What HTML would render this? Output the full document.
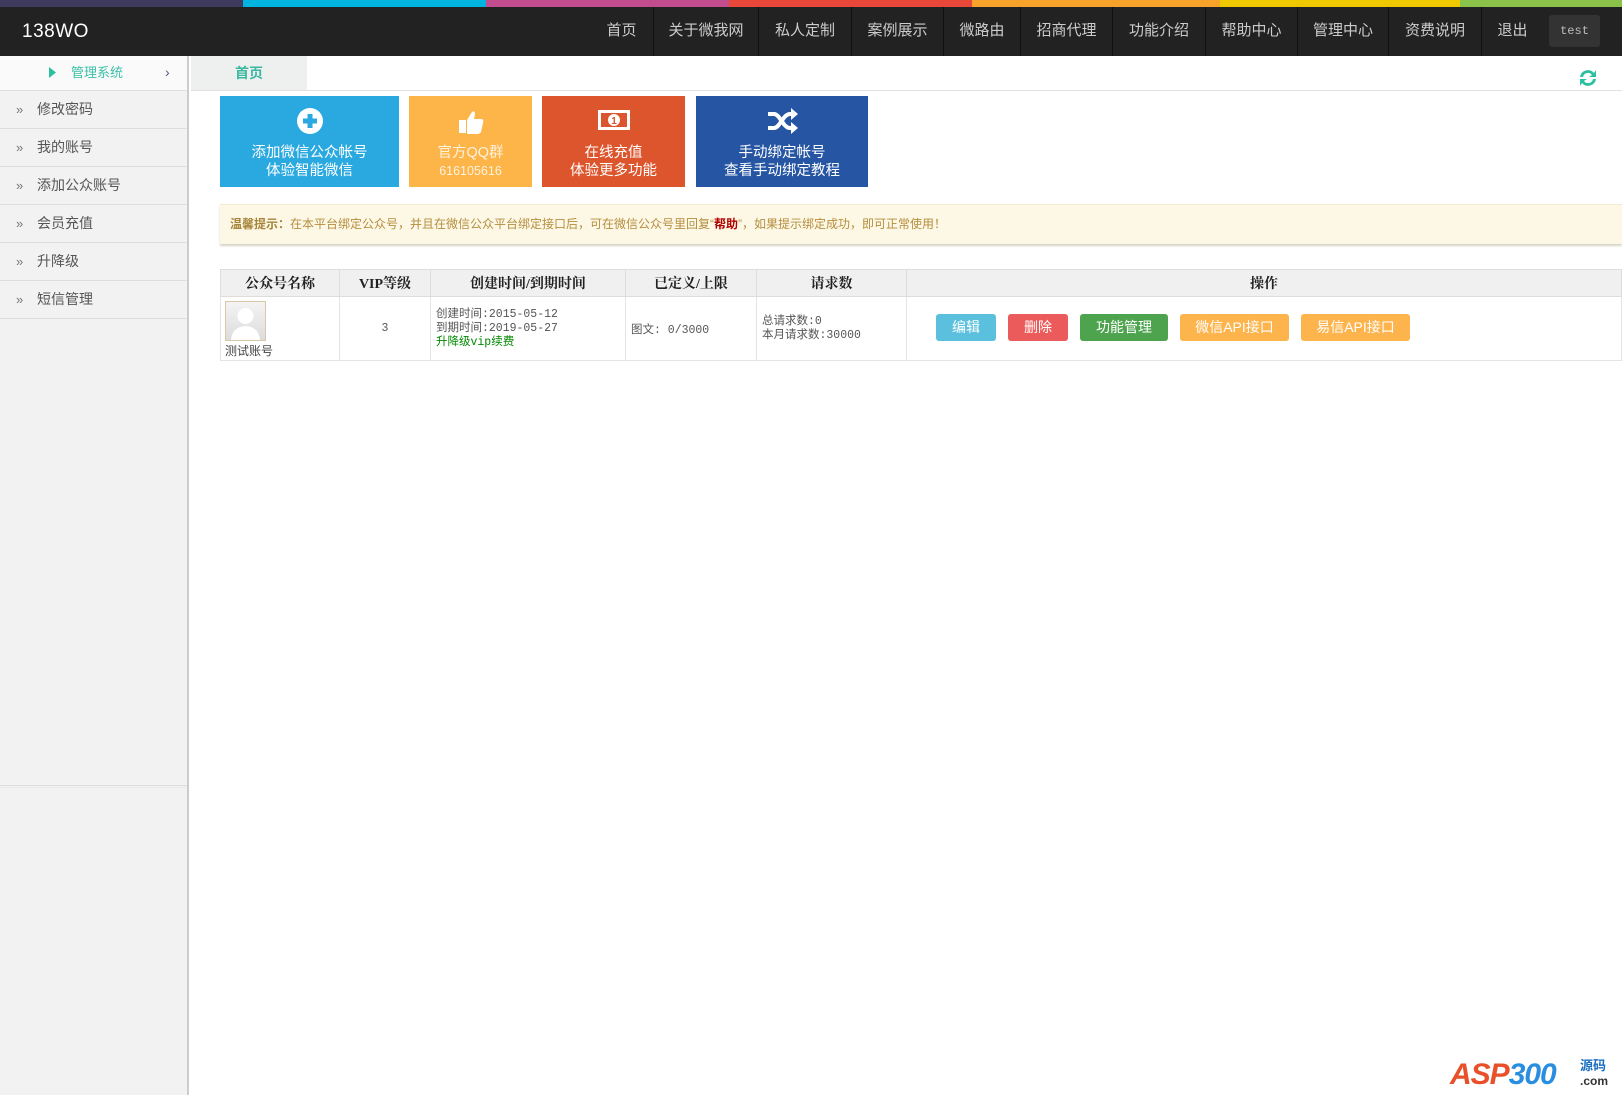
<!DOCTYPE html>
<html><head><meta charset="utf-8">
<style>
*{margin:0;padding:0;box-sizing:border-box}
body{width:1622px;height:1095px;overflow:hidden;background:#fff;font-family:"Liberation Sans","Noto Sans CJK SC",sans-serif;position:relative}
.abs{position:absolute}
.bar{top:0;height:7px}
#hdr{top:7px;left:0;width:1622px;height:49px;background:#222}
.nav{position:absolute;top:7px;height:49px;line-height:47px;color:#ccc;font-size:15px;text-align:center;border-left:1px solid #111}
#side{left:0;top:56px;width:189px;height:1039px;background:#f2f2f2;border-right:2px solid #ccc}
.si{position:absolute;left:0;width:187px;height:38px;border-bottom:1px solid #dedede;font-size:14px;color:#555;line-height:37px}
.si b{font-weight:normal;position:absolute;left:16px;color:#777;font-size:13px}
.si span{position:absolute;left:37px}
.tile{position:absolute;top:96px;height:91px;color:#fff;text-align:center;font-size:14.5px;line-height:18px}
.tile .t{position:absolute;left:0;right:0;top:48px}
.tile svg{position:absolute;left:50%;top:12px;transform:translateX(-50%)}
table{position:absolute;left:220px;top:269px;width:1402px;border-collapse:collapse;font-size:12px;color:#555}
th{background:#f0f0f0;height:27px;font-size:14px;color:#222;border:1px solid #ddd;font-family:"Liberation Serif","Noto Serif CJK SC",serif}
td{border:1px solid #e4e4e4;height:64px;vertical-align:middle;font-family:"Liberation Mono","Noto Sans CJK SC",monospace;font-size:11.5px}
.btn{position:absolute;top:314px;height:27px;line-height:27px;color:#fff;font-size:14px;text-align:center;border-radius:3px}
</style></head><body>
<div class="abs bar" style="left:0;width:243px;background:#3e3a5e"></div>
<div class="abs bar" style="left:243px;width:243px;background:#00b4e0"></div>
<div class="abs bar" style="left:486px;width:243px;background:#c24c8e"></div>
<div class="abs bar" style="left:729px;width:243px;background:#e8473a"></div>
<div class="abs bar" style="left:972px;width:248px;background:#f6a22b"></div>
<div class="abs bar" style="left:1220px;width:240px;background:#f0c800"></div>
<div class="abs bar" style="left:1460px;width:162px;background:#8bc34a"></div>
<div id="hdr" class="abs"></div>
<div class="abs" style="left:22px;top:21px;color:#fff;font-size:19px;letter-spacing:0.5px">138WO</div>
<div class="nav" style="left:590px;width:63px;border-left:none">首页</div>
<div class="nav" style="left:653px;width:105px">关于微我网</div>
<div class="nav" style="left:758px;width:93px">私人定制</div>
<div class="nav" style="left:851px;width:92px">案例展示</div>
<div class="nav" style="left:943px;width:77px">微路由</div>
<div class="nav" style="left:1020px;width:92px">招商代理</div>
<div class="nav" style="left:1112px;width:93px">功能介绍</div>
<div class="nav" style="left:1205px;width:92px">帮助中心</div>
<div class="nav" style="left:1297px;width:91px">管理中心</div>
<div class="nav" style="left:1388px;width:93px">资费说明</div>
<div class="nav" style="left:1481px;width:62px">退出</div>
<div class="abs" style="left:1549px;top:15px;width:51px;height:32px;background:#333;border-radius:3px;color:#bbb;font-size:12px;line-height:32px;text-align:center;font-family:'Liberation Mono',monospace">test</div>

<div id="side" class="abs">
 <div class="si" style="top:0;height:35px;background:#fafafa;line-height:33px">
  <svg class="abs" style="left:49px;top:11px" width="7" height="11"><path d="M0 0L7 5.5L0 11Z" fill="#2cc0a0"/></svg>
  <span style="left:71px;color:#3cc0a8;font-size:13px">管理系统</span>
  <span style="left:165px;color:#557;font-size:14px">›</span>
 </div>
 <div class="si" style="top:35px"><b>»</b><span>修改密码</span></div>
 <div class="si" style="top:73px"><b>»</b><span>我的账号</span></div>
 <div class="si" style="top:111px"><b>»</b><span>添加公众账号</span></div>
 <div class="si" style="top:149px"><b>»</b><span>会员充值</span></div>
 <div class="si" style="top:187px"><b>»</b><span>升降级</span></div>
 <div class="si" style="top:225px"><b>»</b><span>短信管理</span></div>
 <div class="abs" style="left:0;top:729px;width:187px;border-top:1px solid #ddd;border-bottom:1px solid #eaeaea;height:3px"></div>
</div>

<div class="abs" style="left:191px;top:56px;width:116px;height:35px;background:#eef0f0;color:#3ab8a0;font-size:14px;line-height:34px;text-align:center;font-weight:bold">首页</div>
<div class="abs" style="left:191px;top:90px;width:1431px;border-top:1px solid #e2e2e2"></div>
<svg class="abs" style="left:1577px;top:67px" width="22" height="22" viewBox="0 0 22 22"><path d="M3 10A8 8 0 0 1 17 6L19 3V10H12L15 8A5 5 0 0 0 6 10Z" fill="#2cc0a0"/><path d="M19 12A8 8 0 0 1 5 16L3 19V12H10L7 14A5 5 0 0 0 16 12Z" fill="#2cc0a0"/></svg>

<div class="tile" style="left:220px;width:179px;background:#29a9e0">
 <svg width="26" height="26" viewBox="0 0 26 26"><circle cx="13" cy="13" r="13" fill="#fff"/><path d="M10.5 6h5v4.5H20v5h-4.5V20h-5v-4.5H6v-5h4.5Z" fill="#29a9e0"/></svg>
 <div class="t">添加微信公众帐号<br>体验智能微信</div></div>
<div class="tile" style="left:409px;width:123px;background:#fdb54a">
 <svg width="28" height="28" viewBox="0 0 28 28"><rect x="2" y="12" width="7" height="13" fill="#fff"/><path d="M10 12L15 4Q18 2 18 6L17 11H25Q27 12 26 15L24 24Q23 26 20 26H10Z" fill="#fff"/></svg>
 <div class="t" style="color:#fff2dc">官方QQ群<br><span style="font-size:12.5px">616105616</span></div></div>
<div class="tile" style="left:542px;width:143px;background:#dc552d">
 <svg width="34" height="24" viewBox="0 0 34 24"><rect x="1" y="2" width="32" height="20" fill="#fff"/><rect x="4" y="5" width="26" height="14" fill="#dc552d"/><circle cx="17" cy="12" r="6" fill="#fff"/><text x="17" y="16" font-size="10" text-anchor="middle" fill="#dc552d" font-family="Liberation Sans" font-weight="bold">1</text></svg>
 <div class="t">在线充值<br>体验更多功能</div></div>
<div class="tile" style="left:696px;width:172px;background:#2555a3">
 <svg width="32" height="26" viewBox="0 0 32 26"><path d="M2 6h6c6 0 9 14 16 14h2" stroke="#fff" stroke-width="4" fill="none"/><path d="M2 20h6c6 0 9-14 16-14h2" stroke="#fff" stroke-width="4" fill="none"/><path d="M25 0l7 6-7 6Z M25 14l7 6-7 6Z" fill="#fff"/></svg>
 <div class="t">手动绑定帐号<br>查看手动绑定教程</div></div>

<div class="abs" style="left:220px;top:204px;width:1402px;height:40px;background:#fdf8e5;border-top:1px solid #f3ecd2;box-shadow:0 2px 2px #d8d4c6;font-size:12px;line-height:38px;color:#b58d3e;padding-left:10px">
<b style="color:#a6843a">温馨提示：</b>在本平台绑定公众号，并且在微信公众平台绑定接口后，可在微信公众号里回复“<b style="color:#b00000">帮助</b>”，如果提示绑定成功，即可正常使用！</div>

<table>
<tr><th style="width:119px">公众号名称</th><th style="width:91px">VIP等级</th><th style="width:195px">创建时间/到期时间</th><th style="width:131px">已定义/上限</th><th style="width:150px">请求数</th><th>操作</th></tr>
<tr><td style="position:relative"><div style="position:absolute;left:4px;top:4px;width:41px;height:40px;border:1px solid #d8c8a8;background:linear-gradient(#f4f4f4,#dcdcdc)"><svg width="39" height="38" viewBox="0 0 39 38"><circle cx="19.5" cy="14" r="8" fill="#fff"/><path d="M5 38Q6 25 19.5 24Q33 25 34 38Z" fill="#fff"/></svg></div><div style="position:absolute;left:4px;top:45px;font-size:12px;color:#444;font-family:'Liberation Sans','Noto Sans CJK SC',sans-serif">测试账号</div></td>
<td style="text-align:center">3</td>
<td style="padding-left:5px;line-height:14px">创建时间:2015-05-12<br>到期时间:2019-05-27<br><span style="color:#080">升降级vip续费</span></td>
<td style="padding-left:5px">图文: 0/3000</td>
<td style="padding-left:5px;line-height:14px">总请求数:0<br>本月请求数:30000</td>
<td></td></tr>
</table>
<div class="btn" style="left:936px;width:60px;background:#5bc0de">编辑</div>
<div class="btn" style="left:1008px;width:60px;background:#ec5b5b">删除</div>
<div class="btn" style="left:1080px;width:88px;background:#4ea44e">功能管理</div>
<div class="btn" style="left:1180px;width:109px;background:#fdb44c">微信API接口</div>
<div class="btn" style="left:1301px;width:109px;background:#fdb44c">易信API接口</div>

<div class="abs" style="left:1450px;top:1058px;font-size:30px;font-weight:bold;font-style:italic;color:#e8502a;font-family:'Liberation Sans',sans-serif;letter-spacing:-1px">ASP<span style="color:#2a8ee0">300</span></div>
<div class="abs" style="left:1580px;top:1058px;font-size:13px;font-weight:bold;color:#1a6ec0;line-height:15px">源码<br><span style="color:#333;font-size:12px">.com</span></div>
</body></html>
